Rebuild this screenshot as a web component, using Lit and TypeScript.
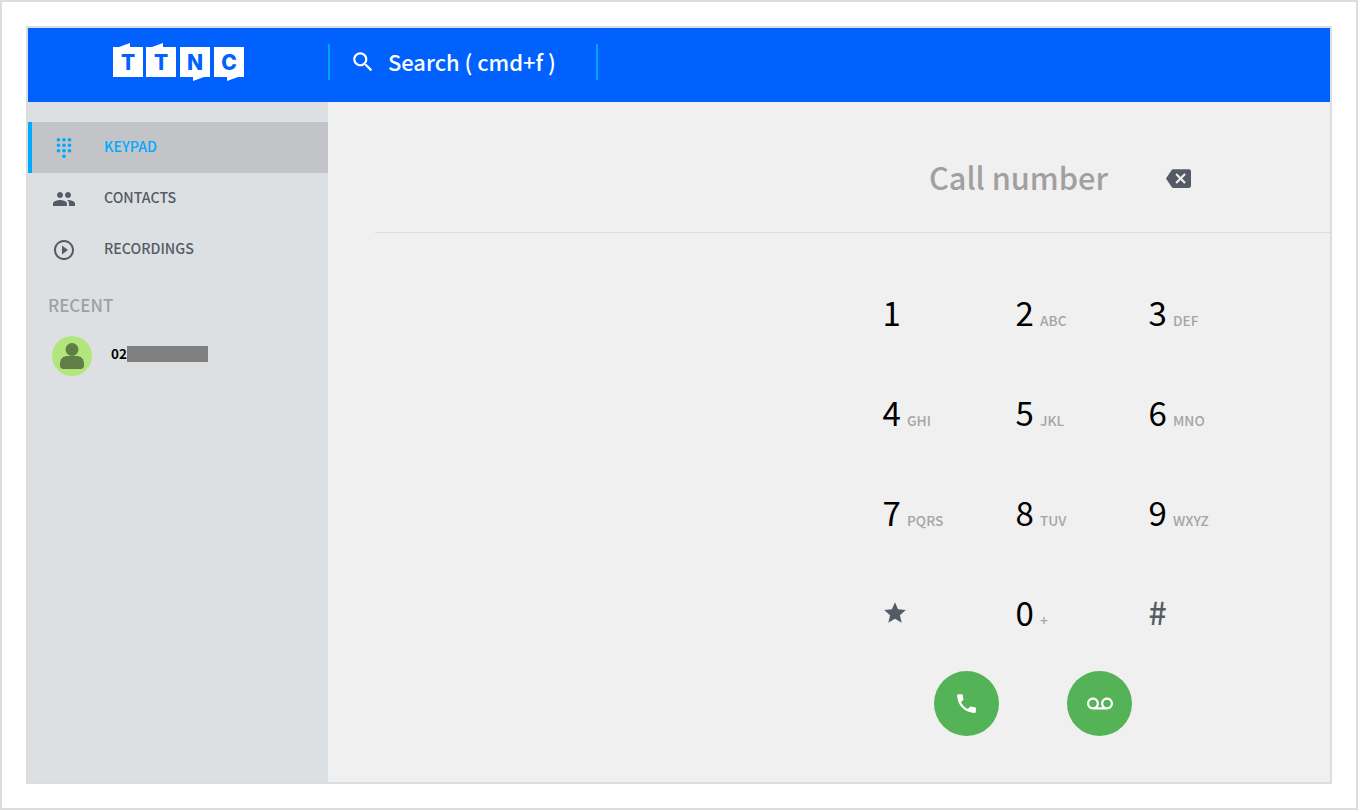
import { LitElement, html, css, svg } from 'lit';
import { customElement } from 'lit/decorators.js';

const ICONS = {
  dialpad: 'M12 19c-1.1 0-2 .9-2 2s.9 2 2 2 2-.9 2-2-.9-2-2-2zM6 1c-1.1 0-2 .9-2 2s.9 2 2 2 2-.9 2-2-.9-2-2-2zm0 6c-1.1 0-2 .9-2 2s.9 2 2 2 2-.9 2-2-.9-2-2-2zm0 6c-1.1 0-2 .9-2 2s.9 2 2 2 2-.9 2-2-.9-2-2-2zm12-8c1.1 0 2-.9 2-2s-.9-2-2-2-2 .9-2 2 .9 2 2 2zm-6 8c-1.1 0-2 .9-2 2s.9 2 2 2 2-.9 2-2-.9-2-2-2zm6 0c-1.1 0-2 .9-2 2s.9 2 2 2 2-.9 2-2-.9-2-2-2zm0-6c-1.1 0-2 .9-2 2s.9 2 2 2 2-.9 2-2-.9-2-2-2zm-6 0c-1.1 0-2 .9-2 2s.9 2 2 2 2-.9 2-2-.9-2-2-2zm0-6c-1.1 0-2 .9-2 2s.9 2 2 2 2-.9 2-2-.9-2-2-2z',
  people: 'M16 11c1.66 0 2.99-1.34 2.99-3S17.66 5 16 5c-1.66 0-3 1.34-3 3s1.34 3 3 3zm-8 0c1.66 0 2.99-1.34 2.99-3S9.66 5 8 5C6.34 5 5 6.34 5 8s1.34 3 3 3zm0 2c-2.33 0-7 1.17-7 3.5V19h14v-2.5c0-2.33-4.67-3.5-7-3.5zm8 0c-.29 0-.62.02-.97.05 1.16.84 1.97 1.97 1.97 3.45V19h6v-2.5c0-2.33-4.67-3.5-7-3.5z',
  play: 'M10 16.5l6-4.5-6-4.5v9zM12 2C6.48 2 2 6.48 2 12s4.48 10 10 10 10-4.48 10-10S17.52 2 12 2zm0 18c-4.41 0-8-3.59-8-8s3.59-8 8-8 8 3.59 8 8-3.59 8-8 8z',
  search: 'M15.5 14h-.79l-.28-.27C15.41 12.59 16 11.11 16 9.5 16 5.91 13.09 3 9.5 3S3 5.91 3 9.5 5.91 16 9.5 16c1.61 0 3.09-.59 4.23-1.57l.27.28v.79l5 4.99L20.49 19l-4.99-5zm-6 0C7.01 14 5 11.99 5 9.5S7.01 5 9.5 5 14 7.01 14 9.5 11.99 14 9.5 14z',
  backspace: 'M22 3H7c-.69 0-1.23.35-1.59.88L0 12l5.41 8.11c.36.53.9.89 1.59.89h15c1.1 0 2-.9 2-2V5c0-1.1-.9-2-2-2zm-3 12.59L17.59 17 14 13.41 10.41 17 9 15.59 12.59 12 9 8.41 10.41 7 14 10.59 17.59 7 19 8.41 15.41 12 19 15.59z',
  call: 'M6.62 10.79c1.44 2.83 3.76 5.14 6.59 6.59l2.2-2.2c.27-.27.67-.36 1.02-.24 1.12.37 2.33.57 3.57.57.55 0 1 .45 1 1V20c0 .55-.45 1-1 1-9.39 0-17-7.61-17-17 0-.55.45-1 1-1h3.5c.55 0 1 .45 1 1 0 1.25.2 2.45.57 3.57.11.35.03.74-.25 1.02l-2.2 2.2z',
  voicemail: 'M18.5 6C15.46 6 13 8.46 13 11.5c0 1.33.47 2.55 1.26 3.5H9.74C10.53 14.05 11 12.83 11 11.5 11 8.46 8.54 6 5.5 6S0 8.46 0 11.5 2.46 17 5.5 17h13c3.04 0 5.5-2.46 5.5-5.5S21.54 6 18.5 6zm-13 9C3.57 15 2 13.43 2 11.5S3.57 8 5.5 8 9 9.57 9 11.5 7.43 15 5.5 15zm13 0c-1.93 0-3.5-1.57-3.5-3.5S16.57 8 18.5 8 22 9.57 22 11.5 20.43 15 18.5 15z',
  star: 'M12 17.27L18.18 21l-1.64-7.03L22 9.24l-7.19-.61L12 2 9.19 8.63 2 9.24l5.46 4.73L5.82 21z',
};

const icon = (name: keyof typeof ICONS, size: number) =>
  html`<svg class="icon" width=${size} height=${size} viewBox="0 0 24 24" fill="currentColor"><path d=${ICONS[name]}></path></svg>`;

const NAV = [
  { label: 'KEYPAD', icon: 'dialpad', size: 22, active: true },
  { label: 'CONTACTS', icon: 'people', size: 24, active: false },
  { label: 'RECORDINGS', icon: 'play', size: 24, active: false },
] as const;

const KEYS = [
  ['1', ''], ['2', 'ABC'], ['3', 'DEF'],
  ['4', 'GHI'], ['5', 'JKL'], ['6', 'MNO'],
  ['7', 'PQRS'], ['8', 'TUV'], ['9', 'WXYZ'],
];

const LOGO_TILES = [
  { x: 0, letter: 'T', tab: '6,4 17,0 17,4' },
  { x: 33, letter: 'T', tab: '39,4 50,0 50,4' },
  { x: 67, letter: 'N', tab: '80,34 80,38 91,34' },
  { x: 101, letter: 'C', tab: '114,34 114,38 125,34' },
];

@customElement('app-root')
export class AppRoot extends LitElement {
  static styles = css`
    :host {
      display: block;
      box-sizing: border-box;
      height: 810px;
      padding: 24px;
      border: 2px solid #dddddd;
      background: #ffffff;
      font-family: 'Noto Sans CJK JP', 'Noto Sans', sans-serif;
    }
    .icon { display: block; flex: none; }
    .frame {
      box-sizing: border-box;
      height: 100%;
      border: 2px solid #dddddd;
      display: flex;
      flex-direction: column;
      background: #f0f0f0;
    }
    header {
      flex: none;
      box-sizing: border-box;
      height: 74px;
      padding-bottom: 6px;
      background: #0061ff;
      display: flex;
      align-items: center;
      color: #ffffff;
    }
    .logo-box { width: 300px; padding-left: 85px; box-sizing: border-box; }
    .logo { display: block; }
    .logo text {
      font-family: Inter, sans-serif;
      font-weight: 800;
      font-size: 21px;
      fill: #0061ff;
      text-anchor: middle;
    }
    .search {
      box-sizing: border-box;
      width: 270px;
      height: 36px;
      border-left: 2px solid #00a5ff;
      border-right: 2px solid #00a5ff;
      display: flex;
      align-items: center;
      gap: 12px;
      padding-left: 20px;
      font-size: 21.9px;
      font-weight: 500;
    }
    .search span { padding-bottom: 2px; }
    .body { flex: 1; display: flex; min-height: 0; }
    aside {
      flex: none;
      width: 300px;
      background: #dde0e3;
      padding-top: 20px;
      box-sizing: border-box;
    }
    .nav-item {
      box-sizing: border-box;
      height: 51px;
      display: flex;
      align-items: center;
      border-left: 4px solid transparent;
      color: #555b66;
      font-size: 14.2px;
      font-weight: 500;
    }
    .nav-item span { padding-bottom: 4px; }
    .nav-item.active {
      background: #c3c4c7;
      border-left-color: #00aaff;
      color: #00aaff;
    }
    .nav-icon {
      width: 24px;
      margin-left: 20px;
      margin-right: 28px;
      display: flex;
      justify-content: center;
    }
    .recent-title {
      margin: 18px 0 0 20px;
      font-size: 17px;
      font-weight: 500;
      line-height: 24px;
      color: #a0a0a0;
    }
    .recent-row {
      display: flex;
      align-items: center;
      margin: 19px 0 0 24px;
    }
    .avatar {
      width: 40px;
      height: 40px;
      border-radius: 50%;
      background: #b2e67c;
      color: #5f7f45;
      display: flex;
      align-items: center;
      justify-content: center;
    }
    .recent-number {
      margin-left: 19px;
      margin-top: -4px;
      font-size: 13.5px;
      font-weight: 700;
      color: #000000;
      display: flex;
      align-items: center;
    }
    .recent-number span:first-child { padding-bottom: 2px; width: 16px; }
    .redacted { width: 81px; height: 16px; background: #808080; }
    main { flex: 1; min-width: 0; }
    .call-row {
      box-sizing: border-box;
      height: 131px;
      margin-left: 47px;
      margin-right: -1px;
      padding: 22px 0 0 554px;
      border-bottom: 1px solid #dddddd;
      display: flex;
      align-items: center;
      gap: 58px;
    }
    .call-label { font-size: 30.7px; font-weight: 500; color: #a0a0a0; padding-bottom: 4px; }
    .backspace { color: #555b66; }
    .keys {
      margin: 31px 0 0 554px;
      display: grid;
      grid-template-columns: repeat(3, 133px);
      grid-auto-rows: 100px;
    }
    .key { display: flex; align-items: center; }
    .digit {
      box-sizing: border-box;
      font-size: 33px;
      line-height: 40px;
      color: #000000;
      width: 25px;
      padding: 0 0 5px 0.5px;
    }
    .sub { font-size: 13.7px; font-weight: 500; color: #a5a5a5; margin-top: 11px; }
    .symbol { color: #555b66; }
    .digit.symbol { color: #555b66; font-weight: 500; font-size: 32px; padding-bottom: 6px; }
    .key.symbol { padding-bottom: 2px; box-sizing: border-box; }
    .actions { display: flex; gap: 68px; margin: 7px 0 0 606px; }
    .round {
      width: 65px;
      height: 65px;
      border-radius: 50%;
      background: #54b257;
      color: #ffffff;
      display: flex;
      align-items: center;
      justify-content: center;
    }
  `;

  private renderLogo() {
    return html`<svg class="logo" width="131" height="38" viewBox="0 0 131 38">
      ${LOGO_TILES.map(
        (t) => svg`
          <rect x=${t.x} y="4" width="30" height="30" fill="#ffffff"></rect>
          <polygon points=${t.tab} fill="#ffffff"></polygon>
          <text x=${t.x + 15} y="27">${t.letter}</text>
        `,
      )}
    </svg>`;
  }

  render() {
    return html`
      <div class="frame">
        <header>
          <div class="logo-box">${this.renderLogo()}</div>
          <div class="search">${icon('search', 26)}<span>Search ( cmd+f )</span></div>
        </header>
        <div class="body">
          <aside>
            ${NAV.map(
              (n) => html`
                <div class="nav-item ${n.active ? 'active' : ''}">
                  <div class="nav-icon">${icon(n.icon, n.size)}</div>
                  <span>${n.label}</span>
                </div>
              `,
            )}
            <div class="recent-title">RECENT</div>
            <div class="recent-row">
              <div class="avatar">
                <svg class="icon" width="26" height="28" viewBox="0 0 26 28" fill="currentColor">
                  <circle cx="13" cy="7.5" r="6.5"></circle>
                  <path d="M1 22c0-5 3-8 7-8h10c4 0 7 3 7 8v2c0 2-1.500 3-3.500 3h-17C2.500 27 1 26 1 24z"></path>
                </svg>
              </div>
              <div class="recent-number"><span>02</span><span class="redacted"></span></div>
            </div>
          </aside>
          <main>
            <div class="call-row">
              <span class="call-label">Call number</span>
              <span class="backspace">${icon('backspace', 25)}</span>
            </div>
            <div class="keys">
              ${KEYS.map(
                ([d, s]) => html`<div class="key"><span class="digit">${d}</span><span class="sub">${s}</span></div>`,
              )}
              <div class="key symbol">${icon('star', 26)}</div>
              <div class="key"><span class="digit">0</span><span class="sub">+</span></div>
              <div class="key"><span class="digit symbol">#</span></div>
            </div>
            <div class="actions">
              <div class="round">${icon('call', 25)}</div>
              <div class="round">${icon('voicemail', 26)}</div>
            </div>
          </main>
        </div>
      </div>
    `;
  }
}

declare global {
  interface HTMLElementTagNameMap {
    'app-root': AppRoot;
  }
}
